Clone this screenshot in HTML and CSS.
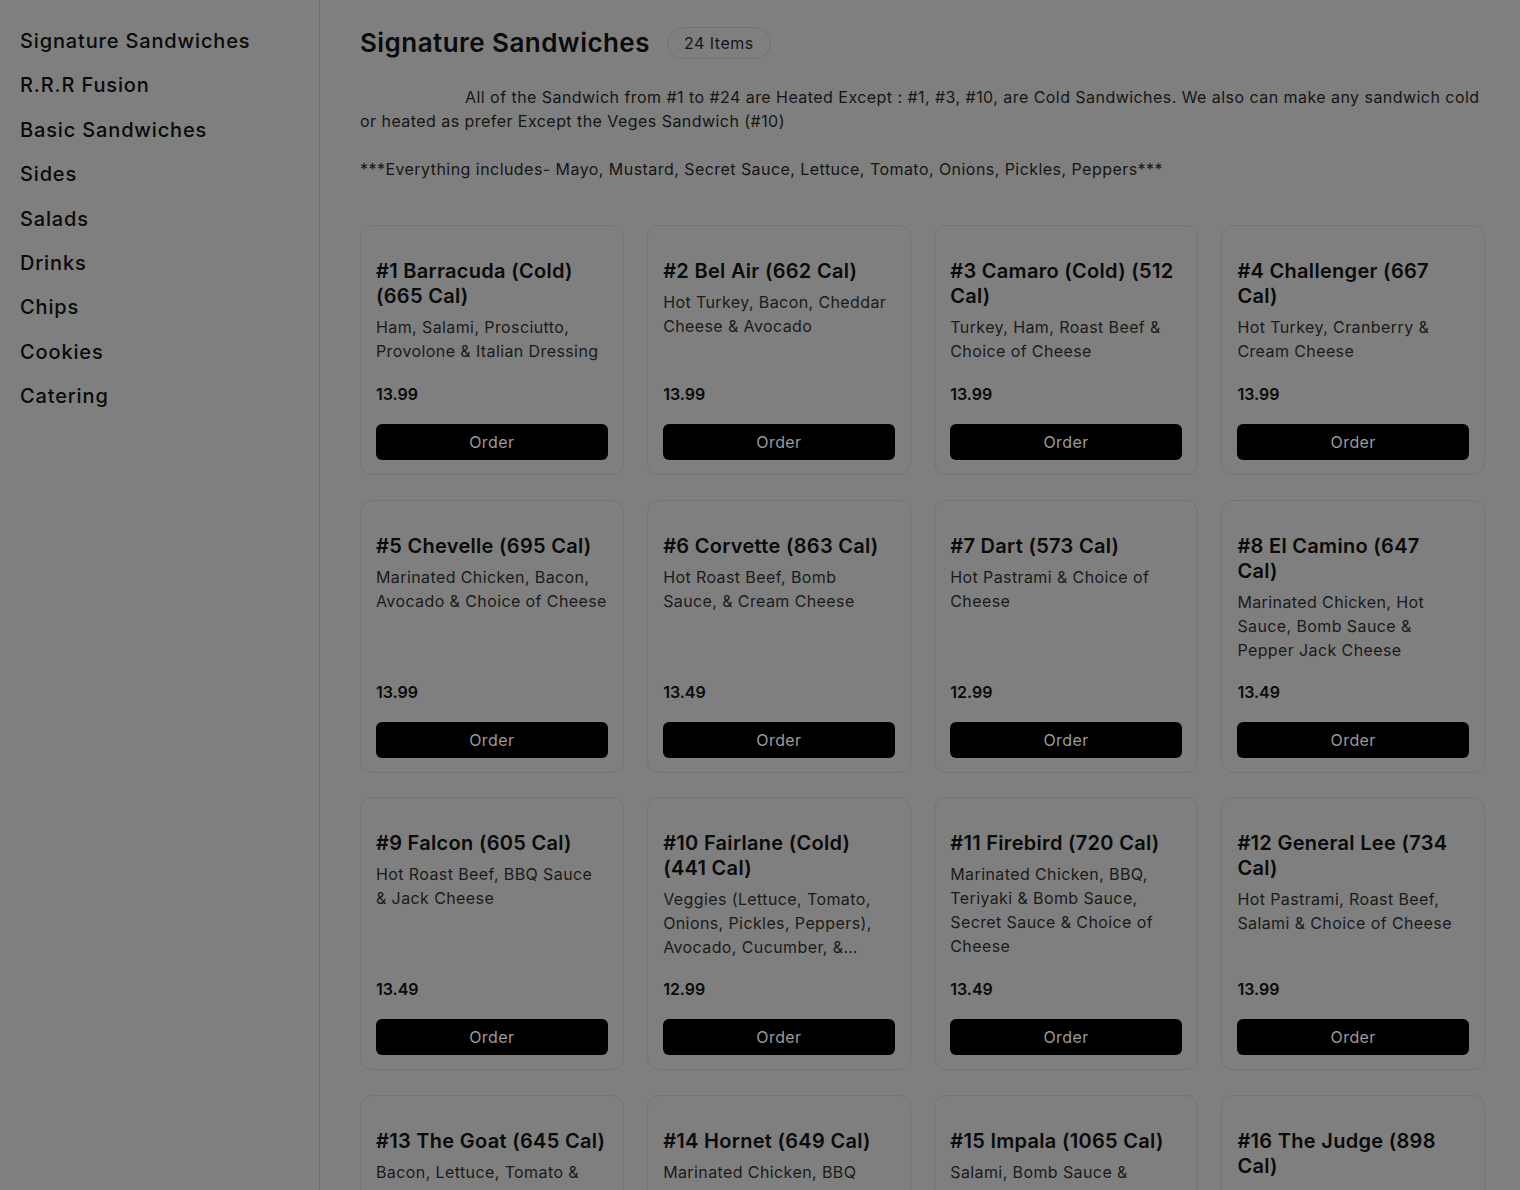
FILE: index.html
```html
<!DOCTYPE html>
<html lang="en">
<head>
<meta charset="utf-8">
<title>Signature Sandwiches</title>
<link rel="stylesheet" href="styles.css">
</head>
<body>
<div class="layout">
  <nav class="sidebar">
    <a class="nav-item">Signature Sandwiches</a>
    <a class="nav-item">R.R.R Fusion</a>
    <a class="nav-item">Basic Sandwiches</a>
    <a class="nav-item">Sides</a>
    <a class="nav-item">Salads</a>
    <a class="nav-item">Drinks</a>
    <a class="nav-item">Chips</a>
    <a class="nav-item">Cookies</a>
    <a class="nav-item">Catering</a>
  </nav>
  <main class="main">
    <header class="section-head">
      <h1 class="section-title">Signature Sandwiches</h1>
      <span class="badge">24 Items</span>
    </header>
    <div class="section-desc">
      <p class="indent">All of the Sandwich from #1 to #24 are Heated Except : #1, #3, #10, are Cold Sandwiches. We also can make any sandwich cold or heated as prefer Except the Veges Sandwich (#10)</p>
      <p>***Everything includes- Mayo, Mustard, Secret Sauce, Lettuce, Tomato, Onions, Pickles, Peppers***</p>
    </div>
    <div class="grid">
      <div class="card"><h3 class="card-title">#1 Barracuda (Cold) (665 Cal)</h3><p class="card-desc">Ham, Salami, Prosciutto, Provolone &amp; Italian Dressing</p><div class="price">13.99</div><button class="order">Order</button></div>
      <div class="card"><h3 class="card-title">#2 Bel Air (662 Cal)</h3><p class="card-desc">Hot Turkey, Bacon, Cheddar Cheese &amp; Avocado</p><div class="price">13.99</div><button class="order">Order</button></div>
      <div class="card"><h3 class="card-title">#3 Camaro (Cold) (512 Cal)</h3><p class="card-desc">Turkey, Ham, Roast Beef &amp; Choice of Cheese</p><div class="price">13.99</div><button class="order">Order</button></div>
      <div class="card"><h3 class="card-title">#4 Challenger (667 Cal)</h3><p class="card-desc">Hot Turkey, Cranberry &amp; Cream Cheese</p><div class="price">13.99</div><button class="order">Order</button></div>

      <div class="card"><h3 class="card-title">#5 Chevelle (695 Cal)</h3><p class="card-desc">Marinated Chicken, Bacon, Avocado &amp; Choice of Cheese</p><div class="price">13.99</div><button class="order">Order</button></div>
      <div class="card"><h3 class="card-title">#6 Corvette (863 Cal)</h3><p class="card-desc">Hot Roast Beef, Bomb Sauce, &amp; Cream Cheese</p><div class="price">13.49</div><button class="order">Order</button></div>
      <div class="card"><h3 class="card-title">#7 Dart (573 Cal)</h3><p class="card-desc">Hot Pastrami &amp; Choice of Cheese</p><div class="price">12.99</div><button class="order">Order</button></div>
      <div class="card"><h3 class="card-title">#8 El Camino (647<br>Cal)</h3><p class="card-desc">Marinated Chicken, Hot Sauce, Bomb Sauce &amp; Pepper Jack Cheese</p><div class="price">13.49</div><button class="order">Order</button></div>

      <div class="card"><h3 class="card-title">#9 Falcon (605 Cal)</h3><p class="card-desc">Hot Roast Beef, BBQ Sauce &amp; Jack Cheese</p><div class="price">13.49</div><button class="order">Order</button></div>
      <div class="card"><h3 class="card-title">#10 Fairlane (Cold) (441 Cal)</h3><p class="card-desc clamp3">Veggies (Lettuce, Tomato, Onions, Pickles, Peppers), Avocado, Cucumber, &amp; Provolone Cheese</p><div class="price">12.99</div><button class="order">Order</button></div>
      <div class="card"><h3 class="card-title">#11 Firebird (720 Cal)</h3><p class="card-desc">Marinated Chicken, BBQ, Teriyaki &amp; Bomb Sauce, Secret Sauce &amp; Choice of Cheese</p><div class="price">13.49</div><button class="order">Order</button></div>
      <div class="card"><h3 class="card-title">#12 General Lee (734 Cal)</h3><p class="card-desc">Hot Pastrami, Roast Beef, Salami &amp; Choice of Cheese</p><div class="price">13.99</div><button class="order">Order</button></div>

      <div class="card"><h3 class="card-title">#13 The Goat (645 Cal)</h3><p class="card-desc">Bacon, Lettuce, Tomato &amp; Avocado</p><div class="price">12.99</div><button class="order">Order</button></div>
      <div class="card"><h3 class="card-title">#14 Hornet (649 Cal)</h3><p class="card-desc">Marinated Chicken, BBQ Sauce &amp; Jack Cheese</p><div class="price">13.49</div><button class="order">Order</button></div>
      <div class="card"><h3 class="card-title">#15 Impala (1065 Cal)</h3><p class="card-desc">Salami, Bomb Sauce &amp; Pepper Jack Cheese</p><div class="price">13.99</div><button class="order">Order</button></div>
      <div class="card"><h3 class="card-title">#16 The Judge (898 Cal)</h3><p class="card-desc">Hot Turkey, Bacon &amp; Choice of Cheese</p><div class="price">13.99</div><button class="order">Order</button></div>
    </div>
  </main>
</div>
</body>
</html>
```

FILE: styles.css
```css
* { box-sizing: border-box; }
html, body {
  margin: 0;
  padding: 0;
  background: #7f7f7f;
  color: #0a0a0a;
  font-family: Inter, "Noto Sans", "Liberation Sans", sans-serif;
}
.layout {
  display: flex;
  align-items: flex-start;
  min-height: 100vh;
}
.sidebar {
  width: 320px;
  flex: 0 0 320px;
  min-height: 1190px;
  border-right: 1px solid #6e6e6e;
  padding: 19px 0 0 20px;
  display: flex;
  flex-direction: column;
}
.nav-item {
  display: block;
  font-size: 20px;
  font-weight: 500;
  line-height: 24.4px;
  padding: 10px 0;
  color: #0a0a0a;
  letter-spacing: 0.85px;
}
.main {
  flex: 1;
  padding: 27px 35px 0 40px;
  min-width: 0;
}
.section-head {
  display: flex;
  align-items: center;
  gap: 17px;
  height: 31px;
}
.section-title {
  margin: 0;
  font-size: 26px;
  line-height: 32px;
  font-weight: 600;
  color: #0a0a0a;
  letter-spacing: 0.45px;
}
.badge {
  display: inline-flex;
  align-items: center;
  height: 32px;
  padding: 0 16px;
  border: 1px solid #737373;
  border-radius: 16px;
  font-size: 16px;
  color: #141414;
  letter-spacing: 0.5px;
}
.section-desc {
  margin-top: 27px;
  font-size: 16px;
  line-height: 24px;
  color: #151515;
  letter-spacing: 0.45px;
}
.section-desc p { margin: 0 0 24px 0; }
.section-desc p:last-child { margin-bottom: 0; }
.indent { text-indent: 105px; }
.grid {
  margin-top: 44px;
  display: grid;
  grid-template-columns: repeat(4, 1fr);
  column-gap: 23.5px;
  row-gap: 24.5px;
}
.card {
  min-height: 250px;
  border: 1px solid #747474;
  border-radius: 12px;
  padding: 33px 15px 14px 15px;
  display: flex;
  flex-direction: column;
}
.card-title {
  margin: 0;
  font-size: 20px;
  line-height: 25px;
  font-weight: 600;
  color: #0a0a0a;
  letter-spacing: 0.3px;
}
.card-desc {
  margin: 6px 0 0 0;
  flex: 1;
  font-size: 16px;
  line-height: 24px;
  color: #1a1a1a;
  letter-spacing: 0.4px;
}
.clamp3 {
  display: -webkit-box;
  -webkit-box-orient: vertical;
  -webkit-line-clamp: 3;
  overflow: hidden;
  align-self: stretch;
}
.price {
  margin-top: 18px;
  font-size: 16px;
  line-height: 24px;
  font-weight: 600;
  color: #0a0a0a;
}
.order {
  margin-top: 18px;
  height: 36px;
  border: none;
  border-radius: 6px;
  background: #000;
  color: #9a9a9a;
  font-family: inherit;
  font-size: 16px;
  letter-spacing: 0.4px;
  width: 100%;
}
```
